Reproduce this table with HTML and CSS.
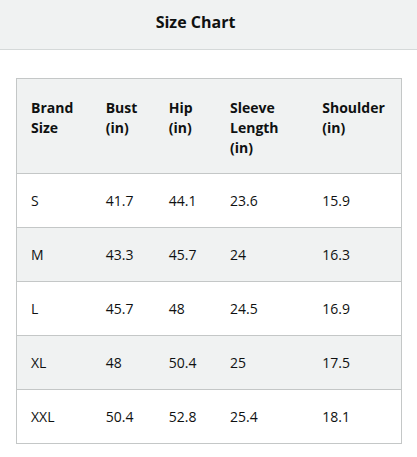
FILE: index.html
```html
<!DOCTYPE html>
<html lang="en">
<head>
<meta charset="utf-8">
<title>Size Chart</title>
<link rel="stylesheet" href="styles.css">
</head>
<body>
<header class="modal-header"><h2 class="modal-title">Size Chart</h2></header>
<main class="modal-body">
<table class="chart">
<colgroup>
<col class="c1"><col class="c2"><col class="c3"><col class="c4"><col class="c5">
</colgroup>
<thead>
<tr class="head"><th>Brand<br>Size</th><th>Bust<br>(in)</th><th>Hip<br>(in)</th><th>Sleeve<br>Length<br>(in)</th><th>Shoulder<br>(in)</th></tr>
</thead>
<tbody>
<tr><td>S</td><td>41.7</td><td>44.1</td><td>23.6</td><td>15.9</td></tr>
<tr class="alt"><td>M</td><td>43.3</td><td>45.7</td><td>24</td><td>16.3</td></tr>
<tr><td>L</td><td>45.7</td><td>48</td><td>24.5</td><td>16.9</td></tr>
<tr class="alt"><td>XL</td><td>48</td><td>50.4</td><td>25</td><td>17.5</td></tr>
<tr><td>XXL</td><td>50.4</td><td>52.8</td><td>25.4</td><td>18.1</td></tr>
</tbody>
</table>
</main>
</body>
</html>
```
FILE: styles.css
```css
html, body { margin: 0; padding: 0; background: #fff; }
body { font-family: "Open Sans", "Noto Sans", sans-serif; color: #0f1111; font-size: 14px; }
.modal-header {
  background: #f0f2f2;
  border-bottom: 1px solid #d5d9d9;
  height: 50px;
  box-sizing: border-box;
  display: flex;
  align-items: center;
  justify-content: center;
  padding-right: 26px;
}
.modal-title { margin: 0; font-size: 16px; font-weight: 700; line-height: 22px; padding-bottom: 5px; }
.modal-body { padding: 28px 15px 0 16px; }
.chart {
  border-collapse: collapse;
  width: 386px;
  table-layout: fixed;
  border: 1px solid #c4c7c7;
}
.c1 { width: 75px; }
.c2 { width: 63px; }
.c3 { width: 61px; }
.c4 { width: 92px; }
.c5 { width: 93px; }
.chart th, .chart td {
  text-align: left;
  padding: 17px 0 16px 14px;
  line-height: 20px;
  border-top: 1px solid #c4c7c7;
}
.chart th { font-weight: 700; vertical-align: top; padding-top: 19px; padding-bottom: 15px; }
.chart td { vertical-align: middle; }
.head { background: #f0f2f2; }
.alt { background: #f0f2f2; }
```
